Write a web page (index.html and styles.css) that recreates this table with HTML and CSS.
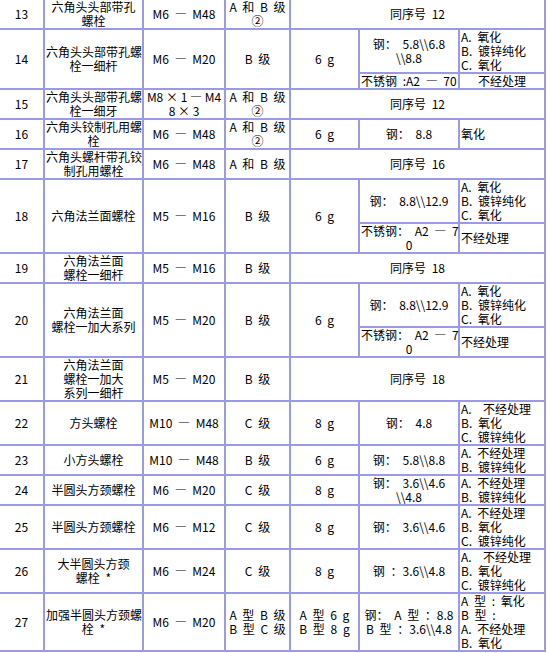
FILE: index.html
```html
<!DOCTYPE html>
<html lang="zh">
<head>
<meta charset="utf-8">
<title>螺栓</title>
<link rel="stylesheet" href="styles.css">
</head>
<body>
<table class="spec">
<colgroup>
<col class="c1"><col class="c2"><col class="c3"><col class="c4"><col class="c5"><col class="c6"><col class="c7">
</colgroup>
<tbody>
<tr>
<td>13</td><td>六角头头部带孔<br>螺栓</td><td>M6 — M48</td><td>A 和 B 级<br>②</td><td colspan="3">同序号 12</td>
</tr>
<tr>
<td rowspan="2">14</td><td rowspan="2">六角头头部带孔螺<br>栓一细杆</td><td rowspan="2">M6 — M20</td><td rowspan="2">B 级</td><td rowspan="2">6 g</td><td>钢： 5.8\\6.8<br>\\8.8</td><td class="l">A. 氧化<br>B. 镀锌纯化<br>C. 氧化</td>
</tr>
<tr>
<td class="l">不锈钢 :A2 — 70</td><td>不经处理</td>
</tr>
<tr>
<td>15</td><td>六角头头部带孔螺<br>栓一细牙</td><td class="t">M8 × 1 — M4<br>8 × 3</td><td>A 和 B 级<br>②</td><td colspan="3">同序号 12</td>
</tr>
<tr>
<td>16</td><td>六角头铰制孔用螺<br>栓</td><td>M6 — M48</td><td>A 和 B 级<br>②</td><td>6 g</td><td>钢： 8.8</td><td class="l">氧化</td>
</tr>
<tr>
<td>17</td><td>六角头螺杆带孔铰<br>制孔用螺栓</td><td>M6 — M48</td><td>A 和 B 级</td><td colspan="3">同序号 16</td>
</tr>
<tr>
<td rowspan="2">18</td><td rowspan="2">六角法兰面螺栓</td><td rowspan="2">M5 — M16</td><td rowspan="2">B 级</td><td rowspan="2">6 g</td><td>钢： 8.8\\12.9</td><td class="l">A. 氧化<br>B. 镀锌纯化<br>C. 氧化</td>
</tr>
<tr>
<td>不锈钢： A2 — 7<br>0</td><td class="l">不经处理</td>
</tr>
<tr>
<td>19</td><td>六角法兰面<br>螺栓一细杆</td><td>M5 — M16</td><td>B 级</td><td colspan="3">同序号 18</td>
</tr>
<tr>
<td rowspan="2">20</td><td rowspan="2">六角法兰面<br>螺栓一加大系列</td><td rowspan="2">M5 — M20</td><td rowspan="2">B 级</td><td rowspan="2">6 g</td><td>钢： 8.8\\12.9</td><td class="l">A. 氧化<br>B. 镀锌纯化<br>C. 氧化</td>
</tr>
<tr>
<td>不锈钢： A2 — 7<br>0</td><td class="l">不经处理</td>
</tr>
<tr>
<td>21</td><td>六角法兰面<br>螺栓一加大<br>系列一细杆</td><td>M5 — M20</td><td>B 级</td><td colspan="3">同序号 18</td>
</tr>
<tr>
<td>22</td><td>方头螺栓</td><td>M10 — M48</td><td>C 级</td><td>8 g</td><td>钢： 4.8</td><td class="l">A. &nbsp;不经处理<br>B. 氧化<br>C. 镀锌纯化</td>
</tr>
<tr>
<td>23</td><td>小方头螺栓</td><td>M10 — M48</td><td>B 级</td><td>6 g</td><td>钢： 5.8\\8.8</td><td class="l">A. 不经处理<br>B. 镀锌纯化</td>
</tr>
<tr>
<td>24</td><td>半圆头方颈螺栓</td><td>M6 — M20</td><td>C 级</td><td>8 g</td><td>钢： 3.6\\4.6<br>\\4.8</td><td class="l">A. 不经处理<br>B. 镀锌纯化</td>
</tr>
<tr>
<td>25</td><td>半圆头方颈螺栓</td><td>M6 — M12</td><td>C 级</td><td>8 g</td><td>钢： 3.6\\4.6</td><td class="l">A. 不经处理<br>B. 氧化<br>C. 镀锌纯化</td>
</tr>
<tr>
<td>26</td><td>大半圆头方颈<br>螺栓 *</td><td>M6 — M24</td><td>C 级</td><td>8 g</td><td>钢 ：3.6\\4.8</td><td class="l">A. &nbsp;不经处理<br>B. 氧化<br>C. 镀锌纯化</td>
</tr>
<tr>
<td>27</td><td>加强半圆头方颈螺<br>栓 *</td><td>M6 — M20</td><td>A 型 B 级<br>B 型 C 级</td><td>A 型 6 g<br>B 型 8 g</td><td>钢： A 型 ：8.8<br>B 型 ：3.6\\4.8</td><td class="l">A 型 : 氧化<br>B 型 :<br>A. 不经处理<br>B. 氧化</td>
</tr>
</tbody>
</table>
</body>
</html>
```
FILE: styles.css
```css
html, body {
  margin: 0;
  padding: 0;
  background: #ffffff;
}

body {
  font-family: "Noto Sans CJK SC", "Liberation Sans", sans-serif;
  font-size: 12px;
  color: #000000;
}

.spec {
  border-collapse: separate;
  border-spacing: 0;
  table-layout: fixed;
  width: 546px;
}

.c1 { width: 45px; }
.c2 { width: 99px; }
.c3 { width: 82px; }
.c4 { width: 65px; }
.c5 { width: 69px; }
.c6 { width: 100px; }
.c7 { width: 86px; }

.spec td {
  box-sizing: border-box;
  padding: 0 1px;
  line-height: 14px;
  text-align: center;
  vertical-align: middle;
  white-space: nowrap;
  word-spacing: 3px;
  border-right: 2px solid #9a9ae6;
  border-bottom: 2px solid #9a9ae6;
}

.spec td.l {
  text-align: left;
}

.spec td.t {
  word-spacing: 0;
}
```
